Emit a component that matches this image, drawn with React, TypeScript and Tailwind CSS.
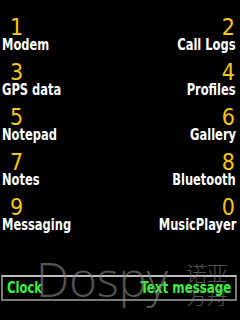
import React from "react";

const rows: [string, string, string, string][] = [
  ["1", "Modem", "2", "Call Logs"],
  ["3", "GPS data", "4", "Profiles"],
  ["5", "Notepad", "6", "Gallery"],
  ["7", "Notes", "8", "Bluetooth"],
  ["9", "Messaging", "0", "MusicPlayer"],
];

const cond = { fontFamily: '"DejaVu Sans Condensed", "DejaVu Sans", sans-serif' };

export default function App() {
  return (
    <div className="relative w-[240px] h-[320px] bg-black overflow-hidden" style={cond}>
      <div className="flex flex-col pt-[17px]">
        {rows.map(([d1, l1, d2, l2]) => (
          <div key={d1} className="flex justify-between h-[45px]">
            <div className="flex flex-col items-start pl-[2px]">
              <span className="text-[23px] leading-[20px] text-[#f5c518] pl-[8px]">{d1}</span>
              <span className="inline-block origin-left scale-x-[0.85] text-[15px] leading-[17px] font-bold text-white whitespace-nowrap">{l1}</span>
            </div>
            <div className="flex flex-col items-end pr-[4px]">
              <span className="text-[23px] leading-[20px] text-[#f5c518] pr-[1px]">{d2}</span>
              <span className="inline-block origin-right scale-x-[0.85] text-[15px] leading-[17px] font-bold text-white whitespace-nowrap">{l2}</span>
            </div>
          </div>
        ))}
      </div>
      <div className="absolute left-[1px] top-[275px] w-[236px] h-[26px] border-2 border-[#7a7a7a] border-t-[#bdbdbd] bg-black flex items-center justify-between pl-[4px] pr-[4px]">
        <span className="inline-block origin-left scale-x-[0.86] text-[15px] leading-[17px] font-bold text-[#3cf03c] whitespace-nowrap">Clock</span>
        <span className="inline-block origin-right scale-x-[0.88] text-[15px] leading-[17px] font-bold text-[#3cf03c] whitespace-nowrap">Text message</span>
      </div>
      <div className="absolute inset-0 pointer-events-none">
        <span
          className="absolute left-[36px] top-[249px] text-[47px] leading-[60px] font-light text-[#8a8a8a] opacity-60"
          style={{ fontFamily: '"Open Sans", "Liberation Sans", sans-serif' }}
        >
          Dospy
        </span>
        <div
          className="absolute left-[186px] top-[261px] flex flex-col text-[21px] leading-[23px] font-light text-[#8a8a8a] opacity-60"
          style={{ fontFamily: '"Noto Sans CJK SC", sans-serif' }}
        >
          <span>诺亚</span>
          <span>方舟</span>
        </div>
      </div>
    </div>
  );
}
